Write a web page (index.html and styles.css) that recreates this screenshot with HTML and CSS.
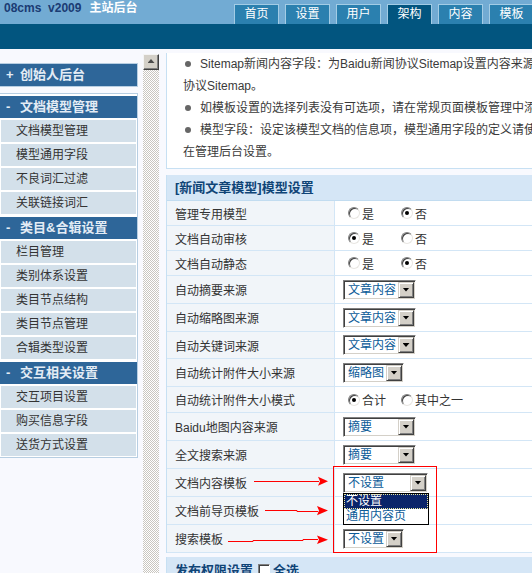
FILE: index.html
```html
<!DOCTYPE html>
<html lang="zh-CN">
<head>
<meta charset="utf-8">
<title>08cms v2009 主站后台</title>
<link rel="stylesheet" href="styles.css">
</head>
<body>
<div class="top">
  <div class="logo"><span class="ver">08cms&nbsp; v2009</span><span class="site">主站后台</span></div>
  <ul class="tabs">
    <li>首页</li><li>设置</li><li>用户</li><li class="on">架构</li><li>内容</li><li>模板</li>
  </ul>
</div>
<div class="band"></div>
<div class="main">
  <div class="side">
    <div class="menu">
      <div class="grp one">
        <div class="hd"><b>+</b>创始人后台</div>
      </div>
      <div class="grp two">
        <div class="hd"><b>-</b>文档模型管理</div>
        <div class="it">文档模型管理</div>
        <div class="it">模型通用字段</div>
        <div class="it">不良词汇过滤</div>
        <div class="it">关联链接词汇</div>
        <div class="hd"><b>-</b>类目&amp;合辑设置</div>
        <div class="it">栏目管理</div>
        <div class="it">类别体系设置</div>
        <div class="it">类目节点结构</div>
        <div class="it">类目节点管理</div>
        <div class="it">合辑类型设置</div>
        <div class="hd"><b>-</b>交互相关设置</div>
        <div class="it">交互项目设置</div>
        <div class="it">购买信息字段</div>
        <div class="it">送货方式设置</div>
      </div>
    </div>
    <div class="sb">
      <div class="sb-up"><span class="sb-arrow"></span></div>
      <div class="sb-track"></div>
    </div>
  </div>
  <div class="content">
    <div class="notes">
      <p><span class="dot"></span>Sitemap新闻内容字段：为Baidu新闻协议Sitemap设置内容来源字段，生成符合百度新闻</p>
      <p>协议Sitemap。</p>
      <p><span class="dot"></span>如模板设置的选择列表没有可选项，请在常规页面模板管理中添加模板。</p>
      <p><span class="dot"></span>模型字段：设定该模型文档的信息项，模型通用字段的定义请使用模型通用字段</p>
      <p>在管理后台设置。</p>
    </div>
    <div class="tbl">
      <div class="th">[新闻文章模型]模型设置</div>
      <div class="row">
        <div class="lab">管理专用模型</div>
        <div class="val"><span class="opt"><span class="rd"></span>是</span><span class="opt"><span class="rd on"></span>否</span></div>
      </div>
      <div class="row">
        <div class="lab">文档自动审核</div>
        <div class="val"><span class="opt"><span class="rd on"></span>是</span><span class="opt"><span class="rd"></span>否</span></div>
      </div>
      <div class="row">
        <div class="lab">文档自动静态</div>
        <div class="val"><span class="opt"><span class="rd"></span>是</span><span class="opt"><span class="rd on"></span>否</span></div>
      </div>
      <div class="row s">
        <div class="lab">自动摘要来源</div>
        <div class="val"><span class="sel w73"><span class="t">文章内容</span><span class="b"></span></span></div>
      </div>
      <div class="row s">
        <div class="lab">自动缩略图来源</div>
        <div class="val"><span class="sel w73"><span class="t">文章内容</span><span class="b"></span></span></div>
      </div>
      <div class="row k">
        <div class="lab">自动关键词来源</div>
        <div class="val"><span class="sel w73"><span class="t">文章内容</span><span class="b"></span></span></div>
      </div>
      <div class="row s">
        <div class="lab">自动统计附件大小来源</div>
        <div class="val"><span class="sel w61"><span class="t">缩略图</span><span class="b"></span></span></div>
      </div>
      <div class="row m">
        <div class="lab">自动统计附件大小模式</div>
        <div class="val"><span class="opt"><span class="rd on"></span>合计</span><span class="opt"><span class="rd"></span>其中之一</span></div>
      </div>
      <div class="row s">
        <div class="lab">Baidu地图内容来源</div>
        <div class="val"><span class="sel w73"><span class="t">摘要</span><span class="b"></span></span></div>
      </div>
      <div class="row s">
        <div class="lab">全文搜索来源</div>
        <div class="val"><span class="sel w73"><span class="t">摘要</span><span class="b"></span></span></div>
      </div>
      <div class="row s">
        <div class="lab">文档内容模板</div>
        <div class="val">
          <span class="sel w85"><span class="t">不设置</span><span class="b"></span>
            <span class="list"><span class="o hl">不设置</span><span class="o">通用内容页</span></span>
          </span>
        </div>
      </div>
      <div class="row s">
        <div class="lab">文档前导页模板</div>
        <div class="val"></div>
      </div>
      <div class="row s">
        <div class="lab">搜索模板</div>
        <div class="val"><span class="sel w61"><span class="t">不设置</span><span class="b"></span></span></div>
      </div>
      <svg class="mark" width="300" height="400" viewBox="0 0 300 400" aria-hidden="true">
        <rect x="166.5" y="291.5" width="103" height="86" fill="none" stroke="#ff0000" stroke-width="1"/>
        <line x1="87" y1="306.5" x2="152" y2="306.5" stroke="#ff0000" stroke-width="1"/>
        <polygon points="151,301.7 161,306.3 151,310.8 153,306.3" fill="#ff0000"/>
        <polyline points="98,335.5 130,335.5 130,336.5 151,336.5" fill="none" stroke="#ff0000" stroke-width="1"/>
        <polygon points="150,331 161,335.6 150,340.2 152,335.6" fill="#ff0000"/>
        <polyline points="61,366.5 86,366.5 86,365.5 136,365.5 136,364.5 151,364.5" fill="none" stroke="#ff0000" stroke-width="1"/>
        <polygon points="150,360.5 161,364.8 150,369 152,364.8" fill="#ff0000"/>
      </svg>
    </div>
    <div class="perm">发布权限设置<span class="cb"></span>全选</div>
  </div>
</div>
</body>
</html>
```
FILE: styles.css
```css
* { box-sizing: border-box; }
body {
  margin: 0;
  width: 532px;
  height: 573px;
  overflow: hidden;
  background: #f8f9fe;
  font: 12px "Liberation Sans", "Noto Sans CJK SC", sans-serif;
  color: #333;
}
p { margin: 0; }

/* top bar */
.top { height: 24px; background: #72abd3; display: flex; }
.logo {
  width: 234px; flex-shrink: 0; padding-left: 4px;
  line-height: 17px; font-weight: bold; font-size: 12px;
  color: #1b3c73; white-space: nowrap;
}
.logo .site { color: #fff; margin-left: 8px; }
.tabs {
  display: flex; gap: 6px; margin: 0; padding: 0; list-style: none;
  align-self: flex-end; flex-shrink: 0;
}
.tabs li {
  width: 45px; height: 20px; flex-shrink: 0;
  border: 1px solid #a3cce5; border-bottom: 0;
  background: #2b80af; color: #fff; text-align: center;
  line-height: 19px; font-size: 12px;
}
.tabs li.on { background: #02557f; }
.band { height: 25px; background: #02557f; }

/* main */
.main { display: flex; height: 524px; }
.side { width: 160px; flex-shrink: 0; display: flex; }
.menu { width: 138px; padding-top: 14px; }
.grp { border: 1px solid #b7cee2; border-left: 0; background: #fff; }
.grp.two { margin-top: 6px; padding: 2px 0 1px; }
.hd {
  height: 22px; line-height: 22px; margin-top: 3px;
  background: #2e6699; color: #e3ecf5;
  font-weight: bold; font-size: 13px; padding-left: 6px; white-space: nowrap;
}
.hd b { display: inline-block; width: 14px; }
.grp .hd:first-child { margin-top: 0; }
.it {
  height: 22px; line-height: 22px; margin: 2px 1px 0;
  background: #d3e0ea; padding-left: 15px; color: #333;
}

/* scrollbar */
.sb { width: 16px; margin: 5px 0 0 5px; display: flex; flex-direction: column; }
.sb-up {
  height: 16px; background: #d4d0c8;
  border: 1px solid; border-color: #f4f4f4 #404040 #404040 #f4f4f4;
  box-shadow: inset -1px -1px #808080;
  display: flex; align-items: center; justify-content: center;
}
.sb-arrow {
  width: 7px; height: 4px; background: #4a4a4a; margin-top: -2px;
  clip-path: polygon(50% 0, 100% 100%, 0 100%);
}
.sb-track {
  flex: 1;
  background: repeating-conic-gradient(#c9c6c0 0 25%, #fff 0 50%) 0 0 / 2px 2px;
}

/* content */
.content { width: 560px; flex-shrink: 0; padding: 4px 0 0 6px; }
.notes {
  background: #fff; border-left: 1px solid #c7e0f3; border-bottom: 1px solid #c7e0f3;
  padding: 0 0 5px 16px; line-height: 22px; white-space: nowrap; overflow: hidden;
  color: #3a3a3a;
}
.dot {
  display: inline-block; width: 6px; height: 6px; border-radius: 50%;
  background: #666; margin: 0 9px 0 2px; vertical-align: 1px;
}
.tbl { position: relative; margin-top: 6px; border-left: 1px solid #c7e0f3; }
.th {
  height: 26px; background: #d5e6f6; border-bottom: 1px solid #c2dcf0;
  padding-left: 8px; line-height: 25px; font-weight: bold; font-size: 13px; color: #0f4476;
}
.row { display: flex; height: 25px; border-bottom: 1px solid #d3e6f6; }
.row.s { height: 28px; }
.row.k { height: 27px; }
.row.m { height: 26px; }
.lab {
  width: 168px; flex-shrink: 0; background: #f1f5f9; border-right: 1px solid #d3e6f6;
  padding-left: 8px; display: flex; align-items: center; white-space: nowrap;
}
.val { flex: 1; background: #fff; padding-left: 8px; display: flex; align-items: center; }
.opt { width: 53px; display: inline-flex; align-items: center; white-space: nowrap; flex-shrink: 0; }
.rd {
  width: 12px; height: 12px; border-radius: 50%; flex-shrink: 0;
  border: 1px solid; border-color: #808080 #e8e6e2 #e8e6e2 #808080;
  box-shadow: inset 1px 1px #404040;
  background: #fff; margin: 0 2px 0 5px;
  display: flex; align-items: center; justify-content: center;
}
.rd.on::after { content: ""; width: 4px; height: 4px; border-radius: 50%; background: #000; }

.sel {
  position: relative; display: inline-flex; align-items: center; height: 20px;
  border: 1px solid; border-color: #808080 #fff #fff #808080;
  box-shadow: inset 1px 1px #404040, inset -1px -1px #d4d0c8;
  padding: 1px; background: #fff;
}
.w73 { width: 73px; }
.w61 { width: 61px; }
.w85 { width: 85px; }
.sel .t { flex: 1; padding-left: 3px; color: #0b5b98; line-height: 16px; white-space: nowrap; }
.sel .b {
  width: 16px; height: 16px; flex-shrink: 0; background: #d4d0c8;
  border: 1px solid; border-color: #d4d0c8 #404040 #404040 #d4d0c8;
  box-shadow: inset 1px 1px #fff, inset -1px -1px #808080;
  display: flex; align-items: center; justify-content: center;
}
.sel .b::before {
  content: ""; width: 7px; height: 4px; background: #000;
  clip-path: polygon(0 0, 100% 0, 50% 100%);
}
.list {
  position: absolute; left: -1px; top: 19px; width: 86px; z-index: 2;
  border: 1px solid #000; background: #fff; display: flex; flex-direction: column;
}
.list .o { height: 15px; line-height: 15px; padding-left: 2px; color: #0b5b98; white-space: nowrap; }
.list .o.hl { background: #0a246a; color: #fff; outline: 1px dotted #e8e8a0; outline-offset: -1px; }

.mark { position: absolute; left: 0; top: 0; overflow: visible; pointer-events: none; z-index: 3; }

.perm {
  margin-top: 4px; height: 25px; background: #d5e6f6; border-left: 1px solid #c7e0f3;
  padding-left: 8px; display: flex; align-items: center;
  font-weight: bold; font-size: 13px; color: #0f4476; white-space: nowrap;
}
.cb {
  width: 12px; height: 12px; background: #fff; margin: 0 3px 0 5px;
  border: 1px solid; border-color: #808080 #fff #fff #808080;
  box-shadow: inset 1px 1px #404040;
}
```
